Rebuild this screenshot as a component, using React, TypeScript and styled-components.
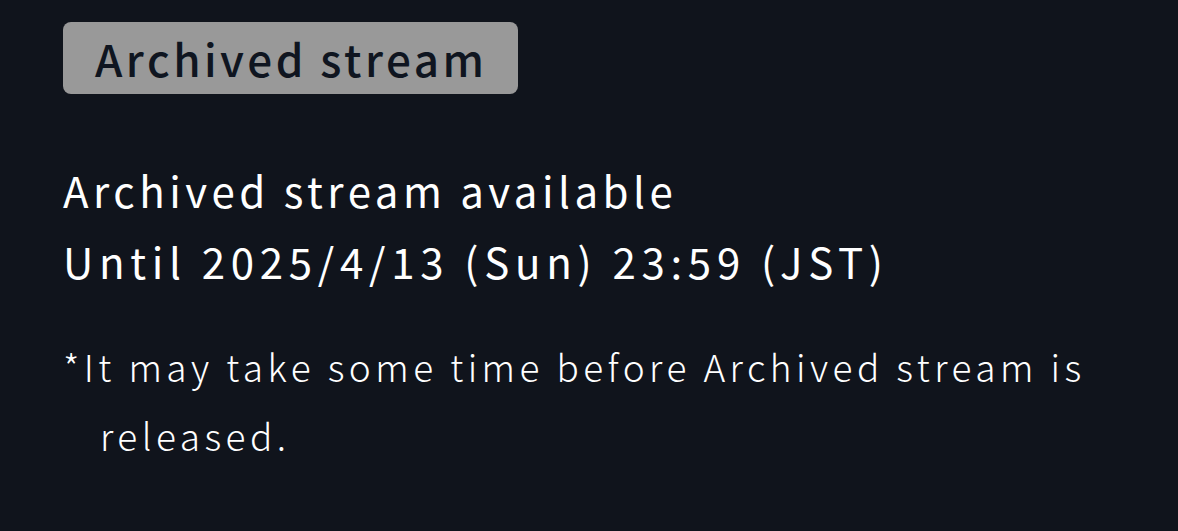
import React from "react";
import styled, { createGlobalStyle } from "styled-components";

const Global = createGlobalStyle`
  html, body { margin: 0; padding: 0; background: #10141c; }
  body { font-family: "Noto Sans CJK JP", "Noto Sans", sans-serif; }
`;

const Page = styled.div`
  width: 1178px;
  height: 531px;
  box-sizing: border-box;
  padding: 22px 63px 0;
  background: #10141c;
  color: #ffffff;
  display: flex;
  flex-direction: column;
  align-items: flex-start;
`;

const Badge = styled.div`
  background: #999999;
  color: #0f1520;
  border-radius: 8px;
  height: 72px;
  padding: 0 30px 0 32px;
  display: flex;
  align-items: center;
  font-size: 44px;
  font-weight: 500;
  letter-spacing: 3.5px;
`;

const Info = styled.div`
  margin-top: 60px;
  display: flex;
  flex-direction: column;
  font-size: 42px;
  line-height: 71px;
  font-weight: 400;
`;

const Line = styled.div<{ $spacing: number }>`
  letter-spacing: ${(p) => p.$spacing}px;
`;

const Note = styled.p`
  margin: 36px 0 0;
  font-size: 37px;
  line-height: 69px;
  font-weight: 200;
  letter-spacing: 4.45px;
  color: #ffffff;
  padding-left: 37px;
  text-indent: -37px;
  width: 1070px;
`;

export default function App() {
  return (
    <Page>
      <Global />
      <Badge>Archived stream</Badge>
      <Info>
        <Line $spacing={4.5}>Archived stream available</Line>
        <Line $spacing={5.7}>Until 2025/4/13 (Sun) 23:59 (JST)</Line>
      </Info>
      <Note>*It may take some time before Archived stream is released.</Note>
    </Page>
  );
}
